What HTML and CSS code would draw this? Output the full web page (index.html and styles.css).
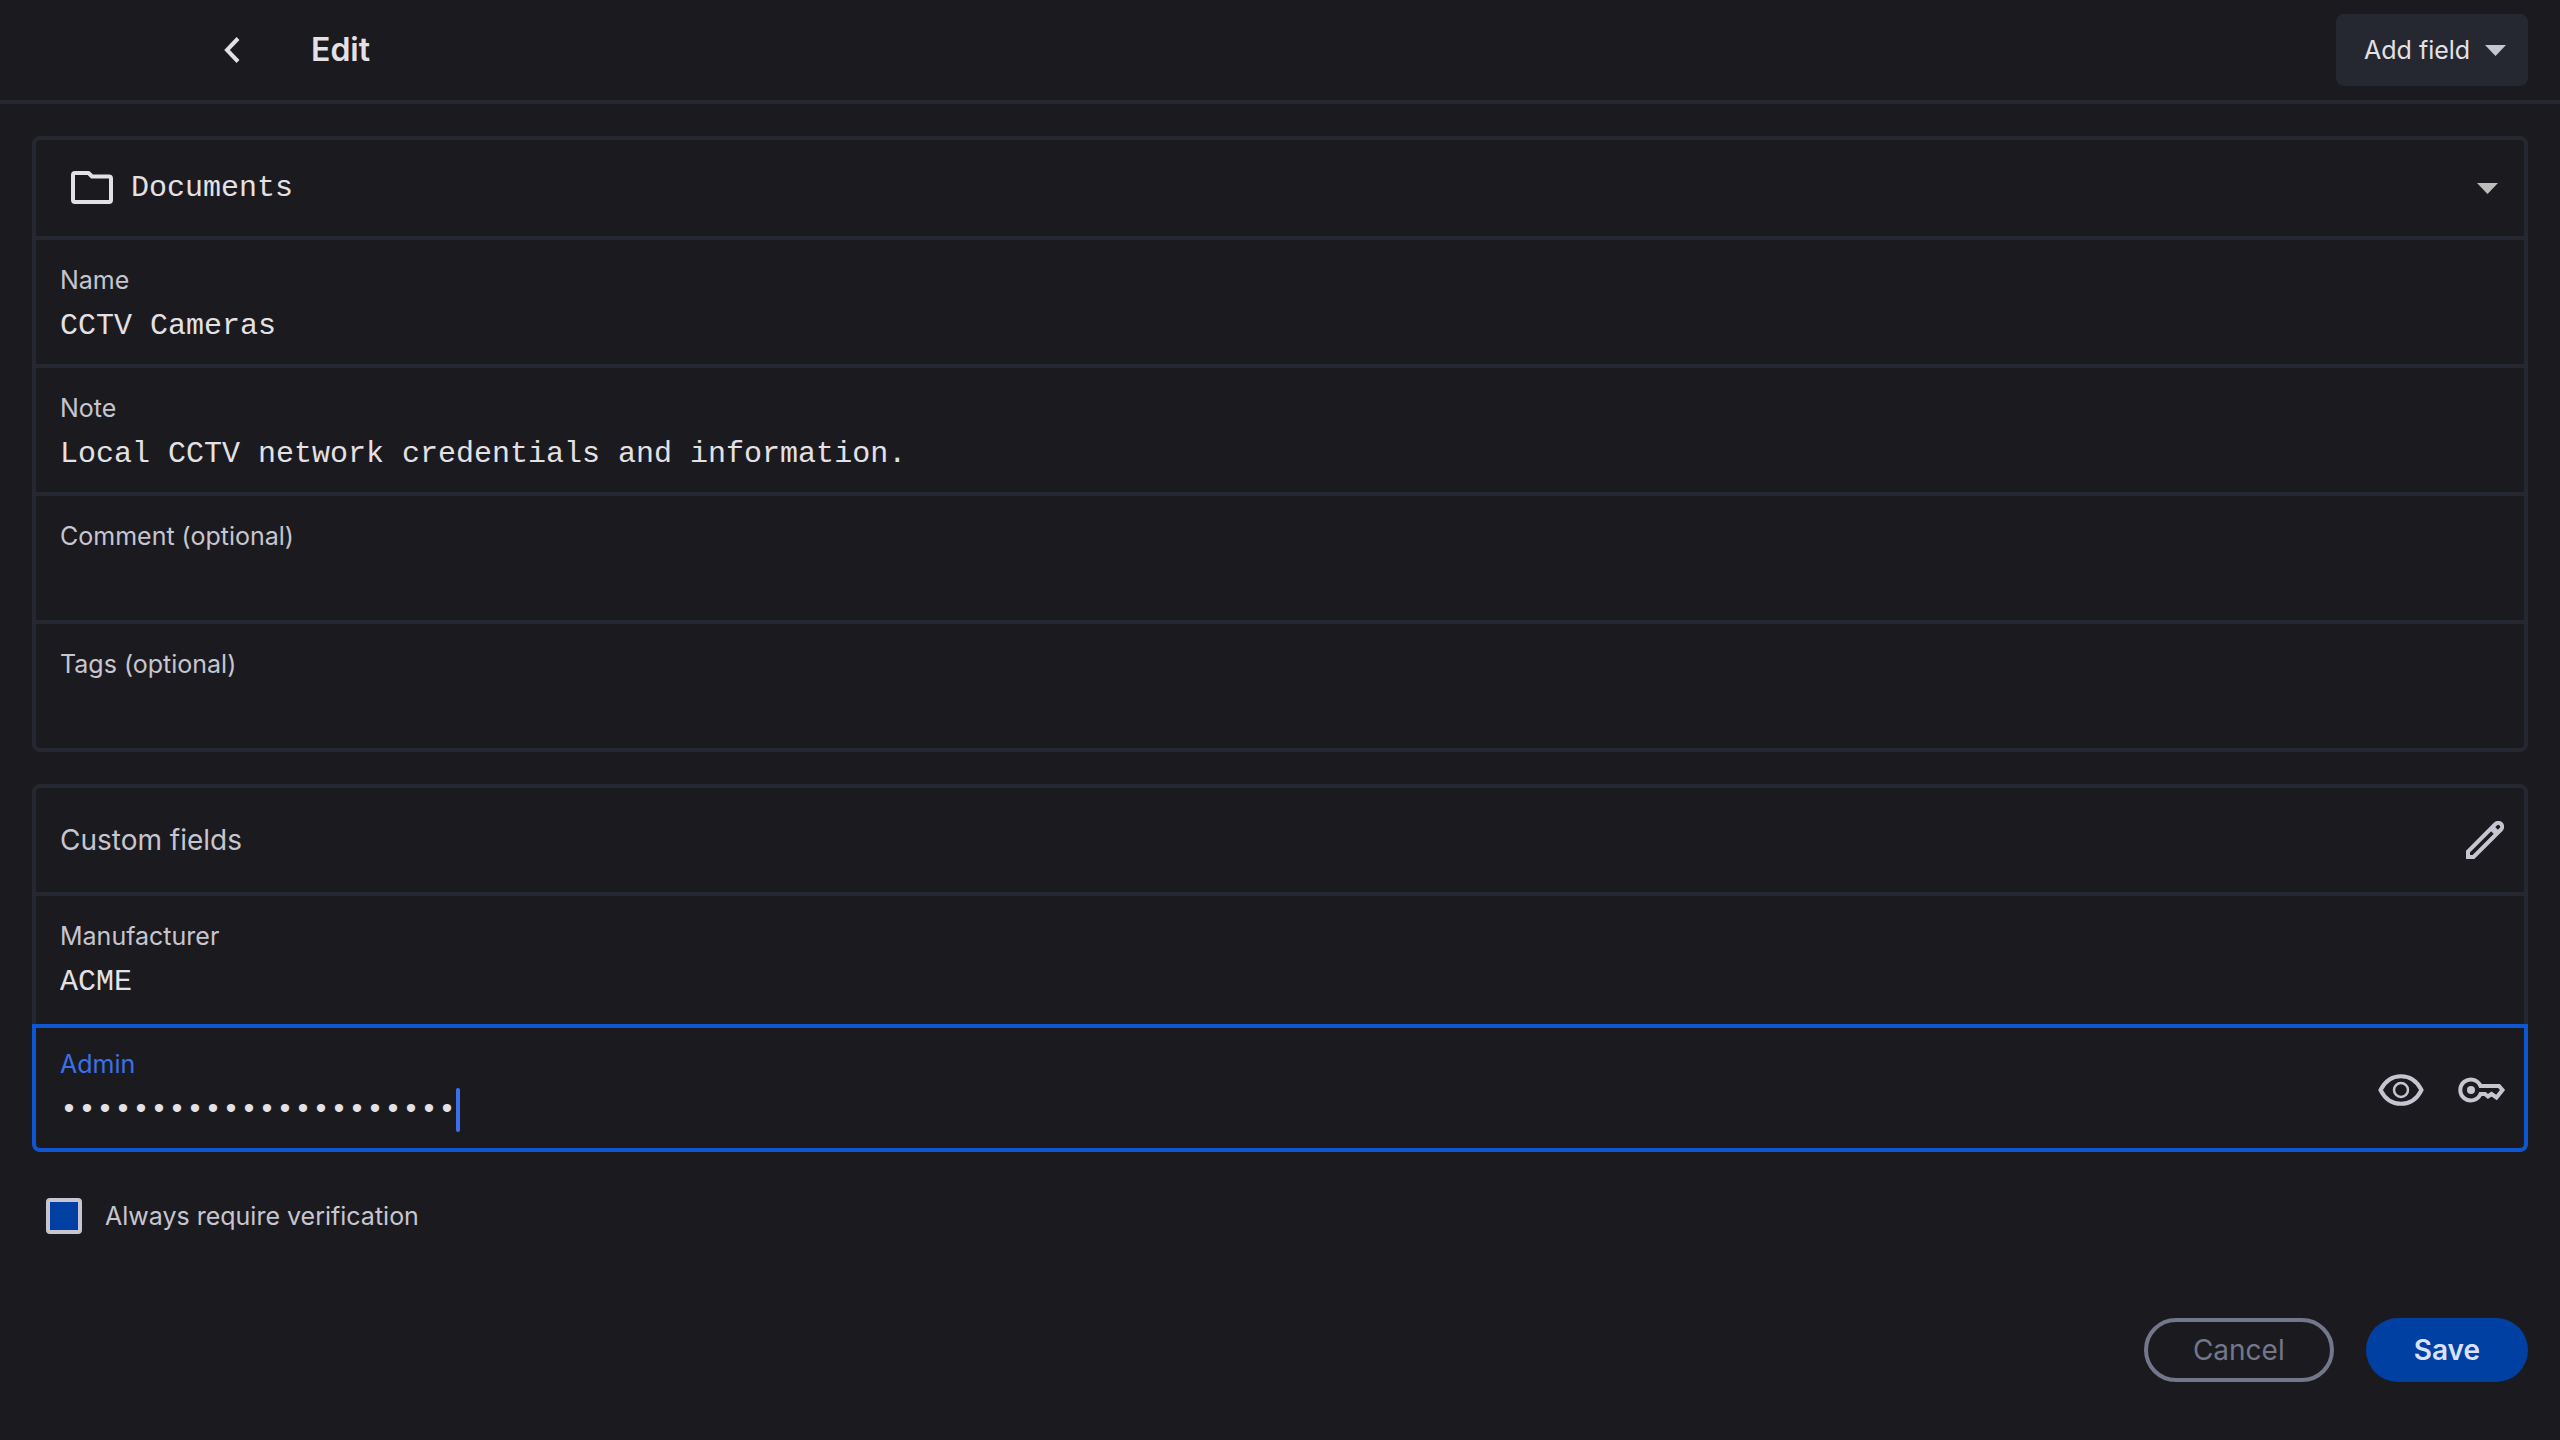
FILE: index.html
```html
<!DOCTYPE html>
<html lang="en">
<head>
<meta charset="utf-8">
<meta name="viewport" content="width=device-width, initial-scale=1">
<title>Edit</title>
<link rel="stylesheet" href="styles.css">
</head>
<body>
<form class="page">
  <header class="topbar">
    <button class="icon-button back" type="button" aria-label="Back">
      <svg width="16" height="26" viewBox="0 0 16 26" fill="none" stroke="currentColor" stroke-width="4"><path d="M14 1.5 3 13l11 11.500"/></svg>
    </button>
    <h1 class="title">Edit</h1>
    <button class="add-field" type="button">
      <span>Add field</span>
      <svg class="arrow" viewBox="0 0 21 11" fill="currentColor"><path d="M0 0h21L10.500 11z"/></svg>
    </button>
  </header>

  <main class="content">
    <section class="panel">
      <div class="folder">
        <svg width="42" height="34" viewBox="0 0 42 34" fill="none" stroke="currentColor" stroke-width="4" stroke-linejoin="round"><path d="M2 4a2 2 0 0 1 2-2h13.500l3.500 3.500H38a2 2 0 0 1 2 2V29a2 2 0 0 1-2 2H4a2 2 0 0 1-2-2z"/></svg>
        <select class="folder-select" aria-label="Folder"><option>Documents</option></select>
        <svg class="arrow folder-arrow" viewBox="0 0 21 11" fill="currentColor"><path d="M0 0h21L10.500 11z"/></svg>
      </div>
      <div class="field">
        <label for="name">Name</label>
        <input id="name" type="text" value="CCTV Cameras">
      </div>
      <div class="field">
        <label for="note">Note</label>
        <input id="note" type="text" value="Local CCTV network credentials and information.">
      </div>
      <div class="field">
        <label for="comment">Comment (optional)</label>
        <input id="comment" type="text">
      </div>
      <div class="field">
        <label for="tags">Tags (optional)</label>
        <input id="tags" type="text">
      </div>
    </section>

    <section class="panel">
      <div class="panel-head">
        <h2>Custom fields</h2>
        <button class="icon-button" type="button" aria-label="Edit custom fields">
          <svg width="38" height="38" viewBox="0 0 38 38" fill="none" stroke="currentColor" stroke-width="4"><path d="M2 36v-5.500L29.500 3a3.500 3.500 0 0 1 5.500 5.500L7.500 36z"/><path d="m26 7 5 5" stroke-width="6"/></svg>
        </button>
      </div>
      <div class="field">
        <label for="manufacturer">Manufacturer</label>
        <input id="manufacturer" type="text" value="ACME">
      </div>
      <div class="field field-active">
        <div class="field-body">
          <label for="admin">Admin</label>
          <div class="secret-row">
            <input id="admin" class="secret" type="password" value="0123456789012345678901">
            <span class="caret"></span>
          </div>
        </div>
        <div class="actions">
          <button class="icon-button" type="button" aria-label="Show password">
            <svg width="46" height="32" viewBox="0 0 46 32" fill="none" stroke="currentColor"><path stroke-width="4" d="M2.500 16C7 7 14 2.200 23 2.200S39 7 43.500 16C39 25 32 29.800 23 29.800S7 25 2.500 16z"/><circle cx="23" cy="16" r="7" stroke-width="2.500"/></svg>
          </button>
          <button class="icon-button" type="button" aria-label="Generate password">
            <svg width="48" height="26" viewBox="0 0 48 26" fill="none" stroke="currentColor" stroke-width="4"><path d="M22.500 9A10.500 10.500 0 1 0 22.500 17H27l3 2.500 3.500-2.500 5 3.500L44.500 13l-3.500-4z"/><circle cx="13" cy="13" r="4" fill="currentColor" stroke="none"/></svg>
          </button>
        </div>
      </div>
    </section>

    <label class="verify"><input type="checkbox"><span>Always require verification</span></label>

    <div class="buttons">
      <button class="pill cancel" type="button">Cancel</button>
      <button class="pill save" type="submit">Save</button>
    </div>
  </main>
</form>
</body>
</html>
```
FILE: styles.css
```css
:root {
  --bg: #1b1b1f;
  --line: #252830;
  --muted: #c6c5d0;
  --text: #e4e1e6;
  --sans: Inter, "Liberation Sans", sans-serif;
  --mono: "Liberation Mono", monospace;
}

* { box-sizing: border-box; }

body {
  margin: 0;
  min-height: 100vh;
  background: var(--bg);
  color: var(--text);
  font-family: var(--sans);
  font-size: 25px;
}

button, input, select {
  margin: 0;
  padding: 0;
  border: 0;
  background: none;
  color: inherit;
  font: inherit;
  outline: none;
}

button { cursor: pointer; }
svg { display: block; flex: none; }

.icon-button { display: flex; color: var(--muted); }
.arrow { width: 21px; height: 11px; color: var(--muted); }

.topbar {
  display: flex;
  align-items: center;
  height: 104px;
  padding: 0 32px 0 224px;
  border-bottom: 4px solid var(--line);
}
.back { color: var(--text); }
.title {
  flex: 1;
  margin: 0 0 0 71px;
  font-size: 32px;
  line-height: 40px;
  font-weight: 600;
}
.add-field {
  display: flex;
  align-items: center;
  justify-content: space-between;
  width: 192px;
  height: 72px;
  padding: 0 22px 0 28px;
  border-radius: 8px;
  background: var(--line);
}

.content { padding: 32px; }
.panel {
  margin-bottom: 32px;
  border: 4px solid var(--line);
  border-radius: 8px;
}

.folder {
  display: flex;
  align-items: center;
  gap: 18px;
  height: 96px;
  padding: 0 26px 0 35px;
}
.folder-select {
  flex: 1;
  appearance: none;
  font-family: var(--mono);
  font-size: 30px;
  line-height: 40px;
}
.folder-arrow { color: #bdbdbd; pointer-events: none; }

.field {
  height: 128px;
  padding: 24px 24px 0;
  border-top: 4px solid var(--line);
}
.field label {
  display: block;
  color: var(--muted);
  line-height: 32px;
}
.field input {
  display: block;
  width: 100%;
  height: 44px;
  margin-top: 8px;
  font-family: var(--mono);
  font-size: 30px;
}

.panel-head {
  display: flex;
  align-items: center;
  justify-content: space-between;
  height: 104px;
  padding: 0 20px 0 24px;
}
.panel-head h2 {
  margin: 0;
  color: var(--muted);
  font-size: 28px;
  font-weight: 400;
}

.field-active {
  display: flex;
  justify-content: space-between;
  margin: 4px -4px -4px;
  border: 4px solid #0f56d0;
  border-radius: 0 0 8px 8px;
  padding: 20px 18px 0 24px;
}
.field-active label { color: #3b70ea; }
.secret-row { display: flex; align-items: center; margin-top: 8px; }
.field .secret { width: 22ch; margin: 0; }
.caret { width: 4px; height: 44px; border-radius: 2px; background: #3b70ea; }
.actions { display: flex; align-items: center; gap: 34px; padding-bottom: 16px; }

.verify {
  display: inline-flex;
  align-items: center;
  gap: 23px;
  margin: 14px 0 0 14px;
  color: var(--muted);
  line-height: 36px;
}
.verify input {
  appearance: none;
  width: 36px;
  height: 36px;
  border: 4px solid var(--muted);
  border-radius: 4px;
  background: #0040a2;
}

.buttons {
  display: flex;
  justify-content: flex-end;
  gap: 32px;
  margin-top: 78px;
}
.pill {
  height: 64px;
  border-radius: 32px;
  padding: 0 48px;
  font-size: 28px;
}
.cancel { border: 4px solid #73778b; padding: 0 45px; color: #73778b; }
.save { background: #0040a2; color: #dbe1ff; font-weight: 600; }
```
